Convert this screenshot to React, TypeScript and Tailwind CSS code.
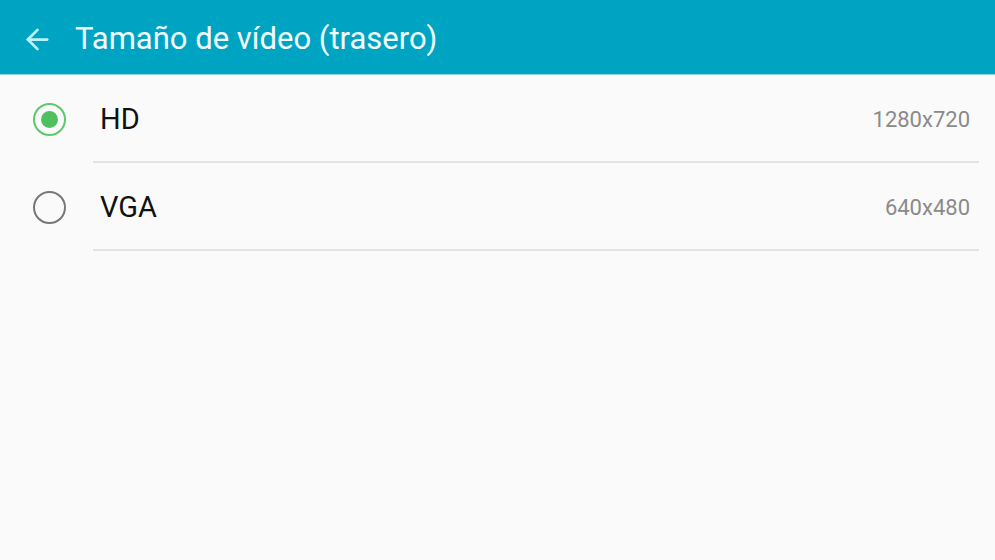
import { ArrowLeft } from "lucide-react";

type Option = { label: string; detail: string; selected?: boolean };

const options: Option[] = [
  { label: "HD", detail: "1280x720", selected: true },
  { label: "VGA", detail: "640x480" },
];

function Radio({ selected }: { selected?: boolean }) {
  return selected ? (
    <span className="flex h-[33px] w-[33px] items-center justify-center rounded-full border-[2.5px] border-[#5cc86a]">
      <span className="h-[17px] w-[17px] rounded-full bg-[#4fc05e]" />
    </span>
  ) : (
    <span className="h-[33px] w-[33px] rounded-full border-[2.5px] border-[#777777]" />
  );
}

export default function App() {
  return (
    <div className="flex h-[560px] w-[995px] flex-col bg-[#fafafa] font-['Roboto',sans-serif]">
      <header className="flex h-[74px] items-center bg-[#00a4c3] pt-[4px] shadow-[0_1px_0_#8fd6e4]">
        <ArrowLeft className="ml-[21px] h-[33px] w-[33px] text-[#bdf3f7]" strokeWidth={2} />
        <h1 className="ml-[21px] text-[31px] text-[#f2fdff]">Tamaño de vídeo (trasero)</h1>
      </header>
      <ul className="mt-[1px]">
        {options.map((o) => (
          <li key={o.label} className="flex h-[88px] items-stretch">
            <div className="flex w-[93px] items-center pl-[33px]">
              <Radio selected={o.selected} />
            </div>
            <div className="mr-[16px] flex flex-1 items-center border-b-2 border-[#e2e2e2] pl-[7px] pr-[9px] pt-[3px]">
              <span className="flex-1 text-[29px] text-[#111111]">{o.label}</span>
              <span className="text-[22px] text-[#8a8a8a]">{o.detail}</span>
            </div>
          </li>
        ))}
      </ul>
    </div>
  );
}
